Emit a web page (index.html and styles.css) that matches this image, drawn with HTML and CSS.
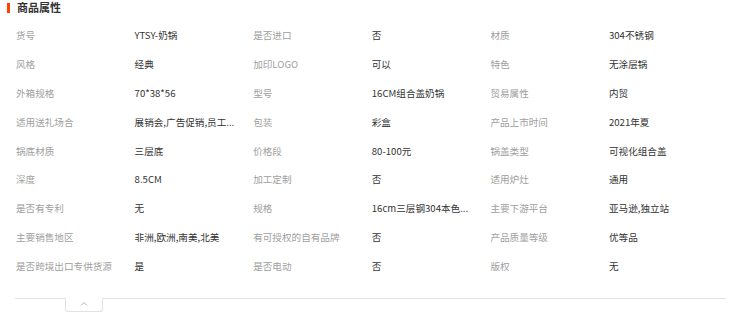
FILE: index.html
```html
<!DOCTYPE html>
<html lang="zh">
<head>
<meta charset="utf-8">
<link rel="stylesheet" href="styles.css">
</head>
<body>
<div class="page">
  <div class="title"><span class="bar"></span><span class="title-text">商品属性</span></div>
  <div class="grid">
    <div class="k">货号</div><div class="v">YTSY-奶锅</div>
    <div class="k">是否进口</div><div class="v">否</div>
    <div class="k">材质</div><div class="v">304不锈钢</div>

    <div class="k">风格</div><div class="v">经典</div>
    <div class="k">加印LOGO</div><div class="v">可以</div>
    <div class="k">特色</div><div class="v">无涂层锅</div>

    <div class="k">外箱规格</div><div class="v">70*38*56</div>
    <div class="k">型号</div><div class="v">16CM组合盖奶锅</div>
    <div class="k">贸易属性</div><div class="v">内贸</div>

    <div class="k">适用送礼场合</div><div class="v">展销会,广告促销,员工...</div>
    <div class="k">包装</div><div class="v">彩盒</div>
    <div class="k">产品上市时间</div><div class="v">2021年夏</div>

    <div class="k">锅底材质</div><div class="v">三层底</div>
    <div class="k">价格段</div><div class="v">80-100元</div>
    <div class="k">锅盖类型</div><div class="v">可视化组合盖</div>

    <div class="k">深度</div><div class="v">8.5CM</div>
    <div class="k">加工定制</div><div class="v">否</div>
    <div class="k">适用炉灶</div><div class="v">通用</div>

    <div class="k">是否有专利</div><div class="v">无</div>
    <div class="k">规格</div><div class="v">16cm三层钢304本色...</div>
    <div class="k">主要下游平台</div><div class="v">亚马逊,独立站</div>

    <div class="k">主要销售地区</div><div class="v">非洲,欧洲,南美,北美</div>
    <div class="k">有可授权的自有品牌</div><div class="v">否</div>
    <div class="k">产品质量等级</div><div class="v">优等品</div>

    <div class="k">是否跨境出口专供货源</div><div class="v">是</div>
    <div class="k">是否电动</div><div class="v">否</div>
    <div class="k">版权</div><div class="v">无</div>
  </div>
  <div class="footer">
    <div class="toggle">
      <svg width="8" height="5" viewBox="0 0 8 5"><path d="M1 4.5 L4 1.5 L7 4.5" fill="none" stroke="#b0b0b0" stroke-width="1"/></svg>
    </div>
  </div>
</div>
</body>
</html>
```
FILE: styles.css
```css
html, body {
  margin: 0;
  padding: 0;
  background: #fff;
}
body {
  font-family: "Noto Sans CJK SC", "Noto Sans", "Liberation Sans", sans-serif;
}
.page {
  width: 755px;
}
.title {
  height: 15px;
  display: flex;
  align-items: center;
  padding-left: 7px;
}
.bar {
  width: 3px;
  height: 10px;
  background: #ff4400;
  margin-right: 7px;
}
.title-text {
  font-size: 11px;
  font-weight: bold;
  color: #333;
  line-height: 15px;
}
.grid {
  margin-top: 5.6px;
  margin-left: 16px;
  display: grid;
  grid-template-columns: repeat(6, 118.6px);
  grid-auto-rows: 28.875px;
  align-items: center;
  font-size: 9.6px;
  line-height: 14px;
}
.k {
  color: #a0a0a0;
  white-space: nowrap;
}
.v {
  color: #333;
  white-space: nowrap;
}
.footer {
  margin-top: 17.5px;
  margin-left: 15px;
  width: 711px;
  border-top: 1px solid #e2e2e2;
  height: 15px;
}
.toggle {
  margin-left: 50px;
  margin-top: -1px;
  width: 38px;
  height: 14px;
  background: #fff;
  border: 1px solid #e2e2e2;
  border-top: none;
  border-radius: 0 0 3px 3px;
  display: flex;
  justify-content: center;
  padding-top: 3px;
  box-sizing: border-box;
}
.toggle svg {
  display: block;
}
```
